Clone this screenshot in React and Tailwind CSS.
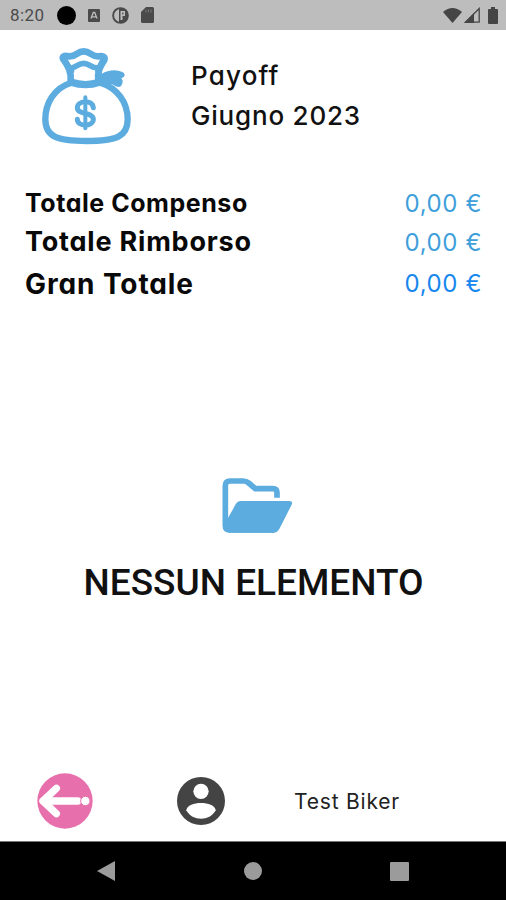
import React from "react";

const totals = [
  {
    label: "Totale Compenso",
    value: "0,00 €",
    row: "h-[38px]",
    labelClass: "text-[25px] tracking-[0.55px]",
    valueClass: "text-[#3f9fdb]",
  },
  {
    label: "Totale Rimborso",
    value: "0,00 €",
    row: "h-[39px]",
    labelClass: "text-[27px] tracking-[0.8px]",
    valueClass: "text-[#3f9fdb]",
  },
  {
    label: "Gran Totale",
    value: "0,00 €",
    row: "h-[44px]",
    labelClass: "text-[28px] tracking-[0.9px]",
    valueClass: "text-[#1787ee]",
  },
];

const StatusBar = () => (
  <div className="flex h-[30px] shrink-0 items-center justify-between bg-[#bdbdbd] pl-[10px] pr-[8px] text-[#4a4a4a]">
    <div className="flex items-center">
      <span className="w-[47px] font-['Roboto',sans-serif] text-[17px] leading-[30px] tracking-[0.4px]">
        8:20
      </span>
      <span className="h-[19px] w-[19px] rounded-full bg-black" />
      <svg className="ml-[12px] h-[13px] w-[12px]" viewBox="0 0 12 13">
        <rect width="12" height="13" rx="1" fill="#4a4a4a" />
        <path
          d="M3 9.5 5.3 3.5h1.4L9 9.5M4 7.8h4"
          fill="none"
          stroke="#bdbdbd"
          strokeWidth="1.3"
        />
      </svg>
      <svg className="ml-[12px] h-[17px] w-[17px]" viewBox="0 0 17 17">
        <circle cx="8.5" cy="8.5" r="7.4" fill="none" stroke="#4a4a4a" strokeWidth="1.9" />
        <path d="M7 1v15h2c5 0 7-4 7-7.5S14 1 9 1z" fill="#4a4a4a" />
        <path d="M8.5 4h4.5v5h-2.5v4h-2z" fill="#bdbdbd" />
        <path d="M10.3 5.5h1.2v2h-1.2z" fill="#4a4a4a" />
      </svg>
      <svg className="ml-[12px] h-[16px] w-[13px]" viewBox="0 0 13 16">
        <path d="M5 0h6.5Q13 0 13 1.5v13q0 1.5-1.5 1.5h-10Q0 16 0 14.5V5z" fill="#4a4a4a" />
        <path d="M5 2.5v3M7.5 2.5v3M10 2.5v3" stroke="#777" />
      </svg>
    </div>
    <div className="flex items-center">
      <svg className="h-[15px] w-[19px]" viewBox="0 0 19 15">
        <path d="M0 4Q9.5-4 19 4L9.5 15z" fill="#454545" />
      </svg>
      <svg className="ml-[2px] h-[16px] w-[16px]" viewBox="0 0 16 16">
        <path d="M15.2 1.5v13.7H1.5z" fill="none" stroke="#454545" strokeWidth="1.3" />
        <path d="M0 16 10 6v10z" fill="#454545" />
      </svg>
      <svg className="ml-[8px] h-[17px] w-[10px]" viewBox="0 0 10 17">
        <path d="M3 0h4v2h2q1 0 1 1v13q0 1-1 1H1q-1 0-1-1V3q0-1 1-1h2z" fill="#454545" />
      </svg>
    </div>
  </div>
);

const MoneyBag = () => (
  <svg
    className="h-[110px] w-[110px] shrink-0"
    viewBox="0 0 330 330"
    fill="none"
    stroke="#5dacdf"
    strokeLinecap="round"
    strokeLinejoin="round"
  >
    <path
      d="M124 128C72 144 46 190 46 238c0 52 34 65 124 65s123-13 123-65c0-50-30-94-82-110"
      strokeWidth="19"
    />
    <path d="M124 127q43 14 84 0" strokeWidth="22" />
    <path
      d="M122 124c2-28-6-44-22-66-6-10 4-12 16-9 22 3 24-15 45-15s25 18 46 15c14-3 20 3 15 13-13 20-20 32-17 62"
      strokeWidth="20"
    />
    <path d="M124 84c15-1 20-14 37-14s26 16 40 13" strokeWidth="17" />
    <path d="M108 64 126 94M215 64 202 94" strokeWidth="14" />
    <path
      d="M208 109c22-17 48-20 68-11 10 6 5 15-9 15 10 5 11 12 5 22-5 8-18 0-25-6l-14 7-29-10z"
      fill="#5dacdf"
      strokeWidth="5"
    />
    <path
      d="M190 203c-3-27-48-21-48 0 0 23 48 12 48 35 0 22-48 24-48 0"
      strokeWidth="15"
    />
    <path d="M166 172v93" strokeWidth="12" />
  </svg>
);

const Header = () => (
  <header className="flex h-[140px] shrink-0 pl-[30px] pt-[10px]">
    <MoneyBag />
    <div className="pl-[51px] pt-[16px] text-[26px] font-medium leading-[40px] text-[#111]">
      <p className="tracking-[1.2px]">Payoff</p>
      <p className="tracking-[0.8px]">Giugno 2023</p>
    </div>
  </header>
);

const Totals = () => (
  <section className="shrink-0 pl-[25px] pr-[24px] pt-[15px]">
    {totals.map((item) => (
      <div key={item.label} className={`flex items-center justify-between ${item.row}`}>
        <span className={`font-bold text-[#090909] ${item.labelClass}`}>{item.label}</span>
        <span className={`text-[24px] tracking-[0.6px] ${item.valueClass}`}>{item.value}</span>
      </div>
    ))}
  </section>
);

const EmptyState = () => (
  <section className="flex flex-1 flex-col items-center pl-[1px] pt-[159px]">
    <svg className="mr-[-8px] h-[80px] w-[95px]" viewBox="0 0 285 240">
      <path
        d="M201 98V82q0-11-13-11h-52l-20-17q-7-6-17-6H60q-14 0-14 14v119q0 14 12 14h135"
        fill="none"
        stroke="#5dacdf"
        strokeWidth="17"
      />
      <path d="M40 184 77 118q6-10 15-10h146q12 0 7 11l-37 73q-6 11-17 11H56z" fill="#5dacdf" />
    </svg>
    <p className="mt-[18px] font-['Roboto',sans-serif] text-[37px] font-medium leading-[40px] text-[#111]">
      NESSUN ELEMENTO
    </p>
  </section>
);

const Footer = () => (
  <footer className="flex h-[82px] shrink-0 items-center pl-[37px] pt-[2px]">
    <svg className="h-[56px] w-[56px]" viewBox="0 0 168 168">
      <circle cx="84" cy="84" r="83" fill="#e76fab" />
      <path
        d="M18 84h104M18 84l40-38M18 84l40 38"
        fill="none"
        stroke="#fff"
        strokeWidth="22"
        strokeLinecap="round"
      />
      <circle cx="145" cy="84" r="14" fill="#fff" stroke="#e76fab" strokeWidth="3" />
    </svg>
    <svg className="ml-[84px] h-[48px] w-[48px]" viewBox="0 0 144 144">
      <circle cx="72" cy="72" r="72" fill="#444" />
      <circle cx="72" cy="43" r="23" fill="#fff" />
      <path d="M28 100c4-29 84-29 88 0-18 34-70 34-88 0z" fill="#fff" />
    </svg>
    <span className="ml-[69px] pt-[2px] text-[21px] tracking-[0.8px] text-[#222]">Test Biker</span>
  </footer>
);

const NavigationBar = () => (
  <nav className="flex h-[59px] shrink-0 items-center justify-between border-t border-[#777] bg-black pl-[97px] pr-[97px]">
    <svg className="h-[22px] w-[18px]" viewBox="0 0 18 22">
      <path d="M0 11 18 1v20z" fill="#9b9b9b" />
    </svg>
    <span className="h-[18px] w-[18px] rounded-full bg-[#9b9b9b]" />
    <span className="h-[19px] w-[19px] rounded-[1px] bg-[#9b9b9b]" />
  </nav>
);

const App = () => {
  return (
    <div className="flex h-screen w-full flex-col overflow-hidden bg-white font-['Inter',sans-serif] [font-feature-settings:'cv11']">
      <StatusBar />
      <Header />
      <Totals />
      <EmptyState />
      <Footer />
      <NavigationBar />
    </div>
  );
};

export default App;
